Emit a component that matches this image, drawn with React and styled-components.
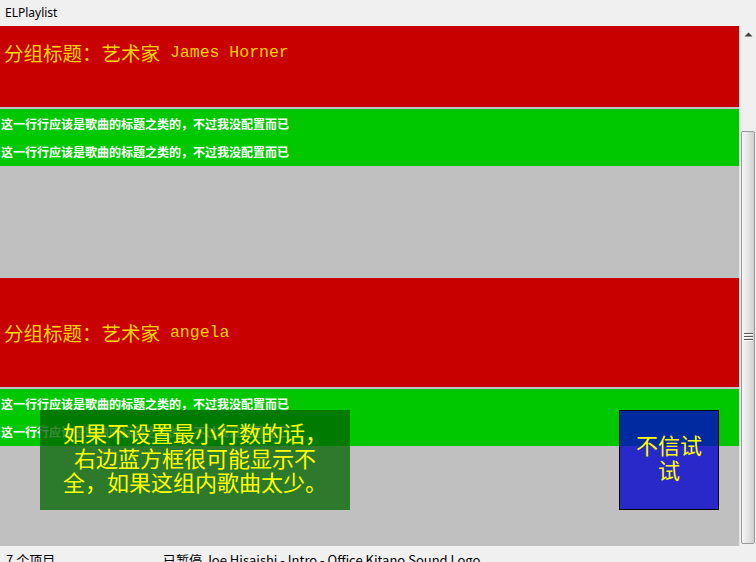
import React from 'react';
import styled, { createGlobalStyle } from "styled-components";

const GlobalStyle = createGlobalStyle`
  html, body {
    margin: 0;
    padding: 0;
    overflow: hidden;
    background: #f0f0f0;
  }
  body {
    font-family: "Noto Sans", "Noto Sans CJK SC", sans-serif;
  }
`;

const Window = styled.div`
  width: 756px;
  height: 570px;
  display: flex;
  flex-direction: column;
  background: #f0f0f0;
`;

const TitleBar = styled.div`
  height: 26px;
  flex-shrink: 0;
  display: flex;
  align-items: center;
  padding-left: 5px;
  padding-bottom: 1px;
  box-sizing: border-box;
  font-size: 12px;
  color: #000;
`;

const Body = styled.div`
  height: 520px;
  flex-shrink: 0;
  display: flex;
  overflow: hidden;
`;

const Viewport = styled.div`
  flex: 1;
  overflow: hidden;
  background: #c0c0c0;
`;

// the list is scrolled a little, so the first header is cut at the top
const List = styled.div`
  margin-top: -28px;
`;

const Group = styled.div`
  position: relative;
  height: 280px;
  background: #c0c0c0;
`;

const GroupHeader = styled.div`
  height: 109px;
  margin-bottom: 2px;
  background: #c80000;
  color: #ffd200;
  display: flex;
  align-items: center;
  padding-left: 4px;
  padding-bottom: 1px;
  box-sizing: border-box;
  white-space: pre;
`;

const Label = styled.span`
  font-family: "Noto Sans CJK SC", sans-serif;
  font-size: 19.5px;
`;

const Name = styled.span`
  font-family: "Liberation Mono", monospace;
  font-size: 16.5px;
`;

const SongList = styled.div`
  background: #00c800;
  padding-bottom: 1px;
`;

const SongRow = styled.div`
  height: 28px;
  display: flex;
  align-items: center;
  padding-left: 1px;
  color: #fff;
  font-family: "Noto Sans CJK SC", sans-serif;
  font-weight: 700;
  font-size: 12px;
`;

const Note = styled.div`
  position: absolute;
  left: 40px;
  top: 132px;
  width: 310px;
  height: 100px;
  padding: 0 16px 6px;
  box-sizing: border-box;
  background: rgba(0, 100, 0, 0.77);
  color: #ffff00;
  font-family: "Noto Sans CJK SC", sans-serif;
  font-size: 22px;
  line-height: 24.5px;
  text-align: center;
  display: flex;
  align-items: center;
  justify-content: center;
`;

const Cover = styled.div`
  position: absolute;
  right: 20px;
  top: 132px;
  width: 100px;
  height: 100px;
  box-sizing: border-box;
  border: 1px solid #000;
  background: rgba(0, 0, 203, 0.79);
  padding: 0 11px 6px;
  color: #ffff00;
  font-family: "Noto Sans CJK SC", sans-serif;
  font-size: 22px;
  line-height: 25px;
  text-align: center;
  display: flex;
  align-items: center;
  justify-content: center;
`;

const ScrollBar = styled.div`
  width: 17px;
  flex-shrink: 0;
  display: flex;
  flex-direction: column;
  background: #f0f0f0;
  border-left: 1px solid #e6e6e6;
  box-sizing: border-box;
`;

const ArrowButton = styled.div`
  height: 17px;
  display: flex;
  align-items: center;
  justify-content: center;
`;

const Thumb = styled.div`
  flex: 1;
  margin: 88px 1px 2px 1px;
  border: 1px solid #9a9a9a;
  border-radius: 2px;
  background: linear-gradient(to right, #f6f6f6 0%, #e6e6e6 45%, #cfcfcf 100%);
  display: flex;
  align-items: center;
  justify-content: center;
`;

const StatusBar = styled.div`
  height: 24px;
  flex-shrink: 0;
  display: flex;
  align-items: center;
  font-family: "Noto Sans CJK SC", sans-serif;
  font-size: 13px;
  color: #000;
  padding-top: 3px;
  box-sizing: border-box;
`;

const StatusCell = styled.div`
  width: ${props => props.width ? props.width + 'px' : 'auto'};
  padding-left: ${props => props.pad || 0}px;
  box-sizing: border-box;
  white-space: nowrap;
`;

const songTitle = '这一行行应该是歌曲的标题之类的，不过我没配置而已';

const groups = [
  { artist: 'James Horner', songs: [songTitle, songTitle] },
  { artist: 'angela', songs: [songTitle, songTitle], extras: true },
];

function UpArrow() {
  return (
    <svg width="9" height="5" viewBox="0 0 9 5">
      <path d="M0.5 4.5 L4.5 0.5 L8.5 4.5 Z" fill="#404040" />
    </svg>
  );
}

function Grip() {
  return (
    <svg width="9" height="9" viewBox="0 0 9 9">
      <rect x="0" y="0" width="9" height="1" fill="#555" />
      <rect x="0" y="1" width="9" height="1" fill="#fff" />
      <rect x="0" y="3" width="9" height="1" fill="#555" />
      <rect x="0" y="4" width="9" height="1" fill="#fff" />
      <rect x="0" y="6" width="9" height="1" fill="#555" />
      <rect x="0" y="7" width="9" height="1" fill="#fff" />
    </svg>
  );
}

function PlaylistGroup({ group }) {
  return (
    <Group>
      <GroupHeader>
        <Label>分组标题：艺术家</Label>
        <Name> {group.artist}</Name>
      </GroupHeader>
      <SongList>
        {group.songs.map((s, i) => <SongRow key={i}>{s}</SongRow>)}
      </SongList>
      {group.extras && (
        <>
          <Note>如果不设置最小行数的话，右边蓝方框很可能显示不全，如果这组内歌曲太少。</Note>
          <Cover>不信试试</Cover>
        </>
      )}
    </Group>
  );
}

export default function App() {
  return (
    <Window>
      <GlobalStyle />
      <TitleBar>ELPlaylist</TitleBar>
      <Body>
        <Viewport>
          <List>
            {groups.map((g, i) => <PlaylistGroup key={i} group={g} />)}
          </List>
        </Viewport>
        <ScrollBar>
          <ArrowButton><UpArrow /></ArrowButton>
          <Thumb><Grip /></Thumb>
        </ScrollBar>
      </Body>
      <StatusBar>
        <StatusCell width={163} pad={6}>7 个项目</StatusCell>
        <StatusCell>已暂停 Joe Hisaishi - Intro - Office Kitano Sound Logo</StatusCell>
      </StatusBar>
    </Window>
  );
}
